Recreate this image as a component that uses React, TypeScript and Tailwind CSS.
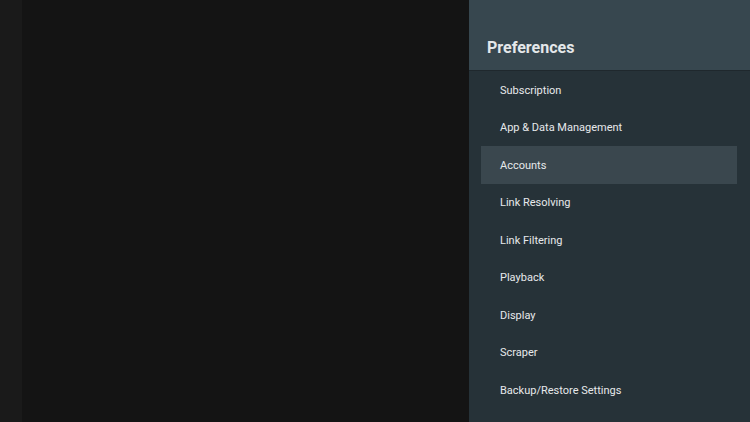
import React from "react";

const items = [
  "Subscription",
  "App & Data Management",
  "Accounts",
  "Link Resolving",
  "Link Filtering",
  "Playback",
  "Display",
  "Scraper",
  "Backup/Restore Settings",
];

export default function App() {
  return (
    <div
      className="flex h-[422px] w-[750px] overflow-hidden bg-[#141414]"
      style={{ fontFamily: "Roboto, 'Noto Sans', sans-serif" }}
    >
      <div className="w-[22px] bg-[#1a1a1a]" />
      <div className="flex-1 bg-[#141414]" />
      <div className="flex w-[281px] flex-col bg-[#263238]">
        <div className="flex h-[71px] shrink-0 items-center border-b border-[#1f282d] bg-[#37474f] pl-[18px] pt-[26px]">
          <span className="text-[16px] font-bold text-[#e4e8ea]">Preferences</span>
        </div>
        <div className="flex flex-col pl-[12px] pr-[13px]">
          {items.map((t, i) => (
            <div
              key={t}
              className={`flex h-[37.5px] items-center pl-[19px] pt-[2px] text-[11px] text-[#e6e9eb] ${
                i === 2 ? "bg-[#3a474e]" : ""
              }`}
            >
              {t}
            </div>
          ))}
        </div>
      </div>
    </div>
  );
}
